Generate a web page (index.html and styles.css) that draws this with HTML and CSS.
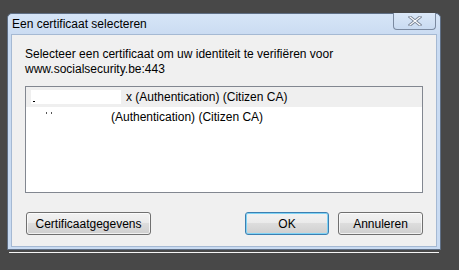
FILE: index.html
```html
<!DOCTYPE html>
<html lang="nl">
<head>
    <meta charset="UTF-8">
    <title>Een certificaat selecteren</title>
    <link rel="stylesheet" href="styles.css">
</head>
<body>
    <div class="window">
        <div class="titlebar">
            <span class="title">Een certificaat selecteren</span>
            <div class="close-btn">
                <svg width="14" height="10" viewBox="0 0 14 10">
                    <path d="M2 1 L12 9 M12 1 L2 9" stroke="#7a8697" stroke-width="3" stroke-linecap="square"/>
                    <path d="M2 1 L12 9 M12 1 L2 9" stroke="#ffffff" stroke-width="1.2" stroke-linecap="square"/>
                </svg>
            </div>
        </div>

        <div class="client">
            <p class="prompt">Selecteer een certificaat om uw identiteit te verifiëren voor<br>www.socialsecurity.be:443</p>

            <ul class="cert-list">
                <li class="selected">
                    <span class="redact redact-1"><span class="speck"></span></span>x (Authentication) (Citizen CA)
                </li>
                <li>
                    <span class="redact redact-2"><span class="dot dot-a"></span><span class="dot dot-b"></span></span>(Authentication) (Citizen CA)
                </li>
            </ul>

            <div class="button-row">
                <button class="btn btn-details">Certificaatgegevens</button>
                <div class="right-buttons">
                    <button class="btn btn-default">OK</button>
                    <button class="btn btn-cancel">Annuleren</button>
                </div>
            </div>
        </div>
    </div>
    <div class="shadow-line"></div>
</body>
</html>
```

FILE: styles.css
```css
body {
    margin: 0;
    background: #484848;
    font-family: 'Liberation Sans', Arial, sans-serif;
    font-size: 12px;
    color: #000;
    height: 270px;
    overflow: hidden;
}

.window {
    margin: 13px 0 0 7px;
    width: 432px;
    border: 1px solid #5f6f85;
    border-radius: 5px 5px 0 0;
    background: #c9dbf2;
}

.titlebar {
    height: 20px;
    display: flex;
    justify-content: space-between;
    align-items: flex-start;
    background: linear-gradient(#d6e5f7, #cbdcf2);
    border-radius: 5px 5px 0 0;
}

.title {
    padding: 3px 0 0 4px;
    line-height: 14px;
}

.close-btn {
    width: 41px;
    height: 16px;
    margin: -1px 4px 0 0;
    border: 1px solid #7b8aa0;
    border-top: none;
    border-radius: 0 0 4px 4px;
    background: linear-gradient(#dbe8f8, #c9dbf1);
    display: flex;
    align-items: center;
    justify-content: center;
}

.client {
    margin: 0 3px 2px 3px;
    height: 211px;
    padding: 0 13px;
    border: 1px solid #a5b9d3;
    background: #f0f0f0;
    display: flex;
    flex-direction: column;
}

.prompt {
    margin: 12px 0 9px 0;
    line-height: 15px;
}

.cert-list {
    list-style: none;
    margin: 0;
    padding: 0;
    height: 105px;
    border: 1px solid #828790;
    background: #fff;
}

.cert-list li {
    height: 20px;
    line-height: 20px;
    padding-left: 5px;
    white-space: nowrap;
}

.cert-list li.selected {
    background: #efefef;
}

.redact {
    display: inline-block;
    position: relative;
    vertical-align: top;
}

.redact-1 {
    width: 90px;
    height: 14px;
    margin: 3px 5px 0 0;
    background: #fff;
}

.redact-2 {
    width: 75px;
    height: 14px;
    margin-right: 5px;
}

.speck {
    position: absolute;
    left: 2px;
    top: 11px;
    width: 2px;
    height: 1px;
    background: #000;
}

.dot {
    position: absolute;
    top: 5px;
    width: 1px;
    height: 2px;
    background: #555;
}

.dot-a {
    left: 15px;
}

.dot-b {
    left: 20px;
}

.button-row {
    margin-top: 19px;
    display: flex;
    justify-content: space-between;
}

.right-buttons {
    display: flex;
    gap: 9px;
}

.btn {
    height: 23px;
    padding: 0;
    font-family: inherit;
    font-size: 12px;
    color: #000;
    border: 1px solid #707070;
    border-radius: 3px;
    background: linear-gradient(#f2f2f2 0%, #ebebeb 45%, #dddddd 50%, #cfcfcf 100%);
    box-shadow: inset 0 0 0 1px rgba(255, 255, 255, 0.7);
}

.btn-details {
    width: 125px;
    margin-left: 1px;
}

.btn-default {
    width: 84px;
    border-color: #3c7fb1;
    box-shadow: inset 0 0 0 1px #7fd3f5;
}

.btn-cancel {
    width: 85px;
}

.shadow-line {
    margin: 2px 0 0 9px;
    width: 430px;
    height: 1px;
    background: #f4f4f4;
}
```
